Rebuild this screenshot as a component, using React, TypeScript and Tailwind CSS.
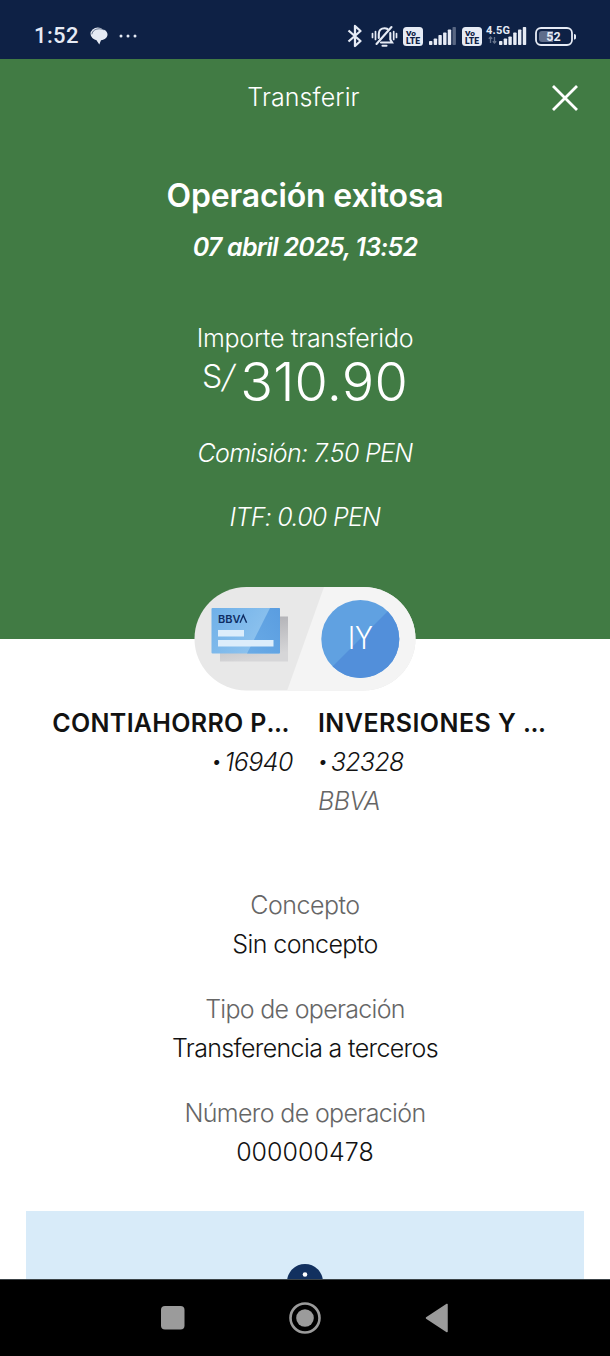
const DETAILS = [
  { label: "Concepto", value: "Sin concepto", labelClass: "tracking-[-0.5px]", valueClass: "tracking-[-0.6px]" },
  { label: "Tipo de operación", value: "Transferencia a terceros", labelClass: "tracking-[-0.7px]", valueClass: "tracking-[-0.65px]" },
  { label: "Número de operación", value: "000000478", labelClass: "tracking-[-0.65px]", valueClass: "tracking-[0.05px]" },
];

function VoLteIcon() {
  return (
    <svg width="20" height="19" viewBox="0 0 20 19">
      <rect width="20" height="19" rx="3.5" fill="#e6ebf5" />
      <text x="3" y="8.5" fontSize="8" fontWeight="900" fontFamily="Roboto, sans-serif" textLength="10" lengthAdjust="spacingAndGlyphs" fill="#0e2145">Vo</text>
      <text x="3" y="16.5" fontSize="8.4" fontWeight="900" fontFamily="Roboto, sans-serif" textLength="14" lengthAdjust="spacingAndGlyphs" fill="#0e2145">LTE</text>
    </svg>
  );
}

function SignalBars({ weakLast }: { weakLast?: boolean }) {
  const heights = [4, 6.5, 10, 12.5, 15.5, 18];
  return (
    <svg width="28" height="18" viewBox="0 0 28 18">
      {heights.map((h, i) => (
        <rect
          key={h}
          x={i * 4.7}
          y={18 - h}
          width="3.4"
          height={h}
          rx="0.8"
          fill="#e6ebf5"
          opacity={weakLast && i === heights.length - 1 ? 0.35 : 1}
        />
      ))}
    </svg>
  );
}

function StatusBar() {
  return (
    <div className="h-[59px] bg-[#0e2145] flex items-center pl-[34px] pr-[33px] pt-[13px] text-[#e6ebf5]">
      <span className="font-[Roboto,sans-serif] font-medium text-[22px] leading-none tracking-[0.4px] w-[56px]">1:52</span>
      <svg width="19" height="18" viewBox="0 0 19 18" fill="none">
        <ellipse cx="7.8" cy="6.8" rx="7.3" ry="6.2" fill="#e6ebf5" />
        <path d="M9.500 1.700c4.600 0 8 2.300 8 5.800 0 3-2.600 5.200-6.500 5.700L9.300 17.400 6.300 13C3.500 12.200 1.700 10.200 1.700 7.500c0-3.500 3.200-5.800 7.800-5.800z" fill="#e6ebf5" />
        <path d="M1.900 7.300C2.200 3.900 5.400 1.800 9.500 1.800c1.800 0 3.400.4 4.700 1.100" stroke="#0e2145" strokeWidth="0.600" />
      </svg>
      <svg className="ml-[10px]" width="18" height="4" viewBox="0 0 18 4" fill="#e6ebf5">
        <circle cx="2" cy="2" r="1.5" />
        <circle cx="9" cy="2" r="1.5" />
        <circle cx="16" cy="2" r="1.5" />
      </svg>

      <div className="ml-auto flex items-center">
        {/* Bluetooth */}
        <svg width="16" height="24" viewBox="0 0 16 24" fill="none" stroke="#e6ebf5" strokeWidth="2.300" strokeLinejoin="round">
          <path d="M1.500 6.500 13.500 17 8 22V2l5.500 5L1.500 17.500" />
        </svg>
        {/* Muted bell */}
        <svg className="ml-[8px]" width="27" height="24" viewBox="0 0 27 24" fill="none" stroke="#e6ebf5" strokeWidth="2.100" strokeLinecap="round">
          <path d="M1.500 9.500v4M4.500 7.500v8M25.500 9.500v4M22.700 7.500v8" strokeWidth="1.700" />
          <path d="M7.800 14V10c0-3.500 2.300-5.800 5.700-5.800 1.200 0 2.200.3 3 .8M19.300 9v6.500l1.800 3H10" />
          <path d="M5.500 20 20.500 3" />
          <path d="M11.500 21.800h4" />
        </svg>
        <div className="ml-[5px]"><VoLteIcon /></div>
        <div className="ml-[6px]"><SignalBars weakLast /></div>
        <div className="ml-[5px]"><VoLteIcon /></div>
        <div className="ml-[4px] flex items-end relative pl-[12px]">
          <span className="absolute left-0 -top-[2px] font-[Roboto,sans-serif] font-bold text-[11px] leading-none tracking-[0.2px]">4.5G</span>
          <svg className="absolute left-[2px] bottom-[1px] opacity-40" width="9" height="8" viewBox="0 0 9 8" fill="none" stroke="#e6ebf5" strokeWidth="1.300">
            <path d="M2.500 7V1M.8 2.800 2.500 1l1.700 1.800M6.500 1v6M4.800 5.200 6.500 7l1.700-1.800" />
          </svg>
          {/* bars sit under the network label, so the middle ones are cut short */}
          <svg width="29" height="18" viewBox="0 0 29 18" fill="#e6ebf5">
            <rect x="1" y="14" width="3.400" height="4" rx="0.800" />
            <rect x="5.700" y="11.500" width="3.400" height="6.500" rx="0.800" />
            <rect x="10.400" y="9.500" width="3.400" height="8.500" rx="0.800" />
            <rect x="15.200" y="5.500" width="3.400" height="12.500" rx="0.800" />
            <rect x="20" y="2.500" width="3.400" height="15.500" rx="0.800" />
            <rect x="24.800" y="0" width="3.400" height="18" rx="0.800" />
          </svg>
        </div>
        <svg className="ml-[8px]" width="42" height="19" viewBox="0 0 42 19">
          <rect x="1" y="1" width="36" height="17" rx="5" fill="none" stroke="#e6ebf5" strokeWidth="1.800" />
          <path d="M7 4h11v11H7a3 3 0 0 1-3-3V7a3 3 0 0 1 3-3z" fill="#5f6d8b" />
          <path d="M39 7v5.500c1.300 0 2-.8 2-1.800V8.800c0-1-.7-1.800-2-1.800z" fill="#e6ebf5" />
          <text x="18.500" y="14" textAnchor="middle" fontSize="12.500" fontWeight="700" fontFamily="Roboto, sans-serif" fill="#e6ebf5">52</text>
        </svg>
      </div>
    </div>
  );
}

function AccountsPill() {
  return (
    <svg className="relative -mt-[52px] mx-auto block shrink-0" width="222" height="104" viewBox="0 0 222 104">
      <defs>
        <clipPath id="pill"><rect x="0.500" width="221" height="103.500" rx="51.750" /></clipPath>
        <clipPath id="avatar"><circle cx="166.300" cy="52" r="39" /></clipPath>
        <linearGradient id="card" x1="0" y1="0" x2="1" y2="0.500">
          <stop offset="0" stopColor="#6fb0e8" />
          <stop offset="1" stopColor="#92c5ef" />
        </linearGradient>
        <linearGradient id="cardDark" x1="0" y1="1" x2="1" y2="0">
          <stop offset="0" stopColor="#6aabe6" />
          <stop offset="1" stopColor="#5a9de0" />
        </linearGradient>
        <linearGradient id="cardShadow" x1="0" y1="0" x2="0.300" y2="1">
          <stop offset="0" stopColor="#a9a9ae" />
          <stop offset="1" stopColor="#d6d6d8" />
        </linearGradient>
      </defs>
      <g clipPath="url(#pill)">
        <rect width="222" height="104" fill="#e8e8e8" />
        <path d="M130 0H222V104H93z" fill="#f4f4f4" />
      </g>

      <rect x="26" y="29.500" width="68" height="45" fill="url(#cardShadow)" />
      <rect x="17.500" y="21" width="68.500" height="45.500" rx="1" fill="url(#card)" />
      <path d="M76 21H85a1 1 0 0 1 1 1v43.500a1 1 0 0 1-1 1H53z" fill="url(#cardDark)" />
      {/* BBVA wordmark: the last A has no bar */}
      <text x="24" y="35.700" fontSize="11" fontWeight="600" fontFamily="Inter, sans-serif" textLength="22.500" lengthAdjust="spacingAndGlyphs" fill="#0f2d63">BBV</text>
      <path d="M46 35.700 49.300 28.300 52.600 35.700" fill="none" stroke="#0f2d63" strokeWidth="1.400" />
      <rect x="24" y="43" width="26" height="6.500" fill="#dcedfb" />
      <rect x="24" y="53" width="55.500" height="6.500" fill="#dcedfb" />

      <g clipPath="url(#avatar)">
        <rect x="127" y="12" width="80" height="80" fill="#60a1e1" />
        <path d="M207 12 127 92h80z" fill="#528fda" transform="translate(0 -1)" />
      </g>
      <text x="154" y="62" fontSize="31" fontWeight="300" fontFamily="Inter, sans-serif" textLength="25" lengthAdjust="spacingAndGlyphs" fill="#fff">IY</text>
    </svg>
  );
}

function NavBar() {
  return (
    <div className="h-[77px] shrink-0 bg-black border-t border-[#3c4347]">
      <svg width="610" height="76" viewBox="0 0 610 76" fill="#9b9b9b">
        <rect x="161" y="26" width="23.500" height="23.500" rx="4" />
        <circle cx="305" cy="38" r="14.500" fill="none" stroke="#9b9b9b" strokeWidth="2.600" />
        <circle cx="305" cy="38" r="8.800" />
        <path d="M426.500 38 447 24.500v27z" stroke="#9b9b9b" strokeWidth="1.500" strokeLinejoin="round" />
      </svg>
    </div>
  );
}

export default function App() {
  return (
    <div className="w-[610px] h-[1356px] overflow-hidden bg-white flex flex-col font-[Inter,sans-serif] font-light text-[25px] text-[#121212]">
      <StatusBar />

      <header className="h-[580px] shrink-0 bg-[#417b44] text-white text-center flex flex-col">
        <div className="h-[78px] flex items-center">
          <div className="w-[64px]" />
          <span className="flex-1 pr-[3px] tracking-[0.1px]">Transferir</span>
          <button className="w-[64px] mr-[14px] -ml-[14px] flex justify-center pl-[1px]">
            <svg width="28" height="28" viewBox="0 0 28 28" fill="none" stroke="#fff" strokeWidth="2.800">
              <path d="M2 2 26 26M26 2 2 26" />
            </svg>
          </button>
        </div>
        <h1 className="mt-[37px] leading-[44px] text-[32px] font-semibold tracking-[-0.15px]">Operación exitosa</h1>
        <p className="mt-[9px] leading-[40px] font-semibold italic tracking-[-0.75px]">07 abril 2025, 13:52</p>
        <p className="mt-[55px] leading-[32px] tracking-[-0.27px]">Importe transferido</p>
        <div className="h-[57px] flex justify-center">
          <span className="text-[32px] leading-[46px] mr-[3px]">
            S<span className="inline-block -skew-x-12 ml-[1px] mr-[3px]">/</span>
          </span>
          <span className="text-[54px] leading-[56px] tracking-[0.2px]">310.90</span>
        </div>
        <p className="mt-[24px] leading-[36px] italic tracking-[-0.7px]">Comisión: 7.50 PEN</p>
        <p className="mt-[28px] leading-[36px] italic tracking-[-0.7px]">ITF: 0.00 PEN</p>
      </header>

      <AccountsPill />

      <section className="mt-[13px] grid grid-cols-[293px_1fr] gap-x-[25px] leading-[39px]">
        <div className="text-right">
          <p className="font-semibold pr-[4px] whitespace-nowrap tracking-[0.3px]">
            CONTIAHORRO P<span className="tracking-[-0.5px]">...</span>
          </p>
          <p className="italic tracking-[-0.5px]">
            <span className="font-black mr-[4px]">·</span>16940
          </p>
        </div>
        <div>
          <p className="font-semibold whitespace-nowrap tracking-[0.45px]">
            INVERSIONES Y <span className="tracking-[-0.5px]">...</span>
          </p>
          <p className="italic tracking-[-0.7px]">
            <span className="font-black mr-[4px]">·</span>32328
          </p>
          <p className="italic text-[#666] tracking-[-0.6px]">BBVA</p>
        </div>
      </section>

      <section className="mt-[65px] flex flex-col gap-[26px] text-center leading-[39px]">
        {DETAILS.map((d) => (
          <div key={d.label}>
            <p className={`text-[#666] ${d.labelClass}`}>{d.label}</p>
            <p className={d.valueClass}>{d.value}</p>
          </div>
        ))}
      </section>

      <div className="mt-[39px] mx-[26px] h-[68px] shrink-0 bg-[#d8ebf9] overflow-hidden flex justify-center pt-[53px]">
        <svg className="shrink-0" width="36" height="36" viewBox="0 0 36 36">
          <circle cx="18" cy="18" r="18" fill="#12305f" />
          <circle cx="18" cy="10.500" r="2.300" fill="#fff" />
          <rect x="16.200" y="16" width="3.600" height="12" fill="#fff" />
        </svg>
      </div>

      <NavBar />
    </div>
  );
}
